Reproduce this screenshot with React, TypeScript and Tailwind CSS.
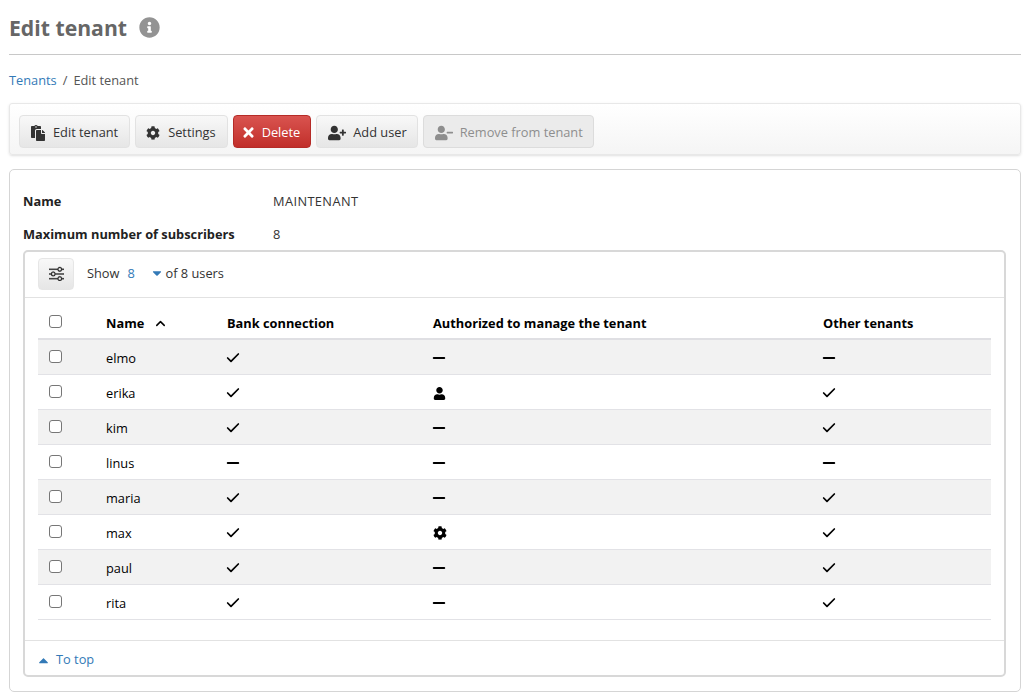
import { Check, ChevronUp, Minus } from "lucide-react";
import { BsSliders } from "react-icons/bs";
import {
  FaCaretDown,
  FaCaretUp,
  FaCog,
  FaInfoCircle,
  FaPaste,
  FaTimes,
  FaUser,
  FaUserMinus,
  FaUserPlus,
} from "react-icons/fa";

type Mark = "check" | "none" | "user" | "gear";

const users: { name: string; bank: Mark; auth: Mark; other: Mark }[] = [
  { name: "elmo", bank: "check", auth: "none", other: "none" },
  { name: "erika", bank: "check", auth: "user", other: "check" },
  { name: "kim", bank: "check", auth: "none", other: "check" },
  { name: "linus", bank: "none", auth: "none", other: "none" },
  { name: "maria", bank: "check", auth: "none", other: "check" },
  { name: "max", bank: "check", auth: "gear", other: "check" },
  { name: "paul", bank: "check", auth: "none", other: "check" },
  { name: "rita", bank: "check", auth: "none", other: "check" },
];

function MarkIcon({ mark }: { mark: Mark }) {
  if (mark === "check") return <Check size={16} strokeWidth={2.6} className="-ml-[2px] text-black" />;
  if (mark === "none") return <Minus size={18} strokeWidth={2.6} className="-ml-[3px] text-black" />;
  if (mark === "user") return <FaUser size={13} className="text-black" />;
  return <FaCog size={14} className="text-black" />;
}

function Box() {
  return <span className="block w-[13px] h-[13px] rounded-[3px] border border-[#767676] bg-white" />;
}

const btn =
  "h-[33px] pt-[2px] flex items-center rounded-[4px] border border-[#e2e2e2] bg-gradient-to-b from-[#f8f8f8] to-[#e6e6e6] text-[#333]";

export default function App() {
  return (
    <div className="h-[700px] overflow-hidden bg-white pl-[9px] pr-[7px] text-[12.8px] text-[#333] font-['Open_Sans','Liberation_Sans',sans-serif]">
      <div className="h-[55px] flex items-center gap-3 border-b border-[#c8c8c8] pt-[1px]">
        <h1 className="text-[21.2px] font-bold text-[#666]">Edit tenant</h1>
        <FaInfoCircle size={21} className="text-[#939393]" />
      </div>

      <nav className="h-[48px] flex items-center gap-[6px] pt-[4px] text-[#555]">
        <a className="text-[#337ab7]">Tenants</a>
        <span>/</span>
        <span>Edit tenant</span>
      </nav>

      <div className="h-[52px] flex items-end gap-[5px] pl-[9px] pr-[10px] pb-[6px] rounded-[3px] border border-[#e8e8e8] bg-gradient-to-b from-white to-[#f5f5f5] shadow-sm">
        <button className={`${btn} gap-[7px] pl-[10px] pr-[11px]`}>
          <FaPaste size={16} />
          Edit tenant
        </button>
        <button className={`${btn} gap-2 pl-[10px] pr-[11px]`}>
          <FaCog size={14} />
          Settings
        </button>
        <button className="h-[33px] pt-[2px] px-[10px] flex items-center gap-[6px] rounded-[4px] border border-[#b52b27] bg-gradient-to-b from-[#d9534f] to-[#c12e2a] text-white">
          <FaTimes size={15} className="-ml-[3px]" />
          Delete
        </button>
        <button className={`${btn} gap-[7px] pl-[11px] pr-[10px]`}>
          <FaUserPlus size={18} />
          Add user
        </button>
        <button className="h-[33px] pt-[2px] pl-[11px] pr-[10px] flex items-center gap-[7px] rounded-[4px] border border-[#dcdcdc] bg-[#ebebeb] text-[#8e8e8e]">
          <FaUserMinus size={18} />
          Remove from tenant
        </button>
      </div>

      <div className="mt-[14px] h-[523px] rounded-[5px] border border-[#d5d5d5] pl-[13px] pr-[14px] pt-[15px]">
        <dl className="h-[65px]">
          <div className="h-[33px] flex items-center">
            <dt className="w-[250px] font-bold text-[#222]">Name</dt>
            <dd className="tracking-[0.4px]">MAINTENANT</dd>
          </div>
          <div className="h-[33px] flex items-center">
            <dt className="w-[250px] font-bold text-[#222]">Maximum number of subscribers</dt>
            <dd>8</dd>
          </div>
        </dl>

        <div className="h-[427px] rounded-[5px] border-2 border-[#d8d8d8] flex flex-col">
          <div className="h-[46px] shrink-0 flex items-center px-[13px] pb-[2px] border-b border-[#e2e2e2]">
            <button className="w-[36px] h-[32px] flex items-center justify-center rounded-[4px] border border-[#e6e6e6] bg-gradient-to-b from-[#f8f8f8] to-[#e6e6e6] text-[#222]">
              <BsSliders size={15} stroke="currentColor" strokeWidth={0.3} />
            </button>
            <span className="ml-[13px]">Show</span>
            <span className="ml-[8px] w-[23px] text-[#337ab7]">8</span>
            <FaCaretDown size={14} className="-mt-[2px] text-[#337ab7]" />
            <span className="ml-[1px]">of 8 users</span>
          </div>

          <div className="flex-1 px-[13px]">
            <table className="w-full table-fixed border-collapse text-black">
              <thead>
                <tr className="h-[41px] border-b-2 border-[#dfdfe3]">
                  <th className="w-[68px] pl-[11px] pt-[7px] text-left font-normal"><Box /></th>
                  <th className="w-[121px] pt-[11px] text-left font-bold">
                    <span className="flex items-center gap-[9px]">
                      Name
                      <ChevronUp size={15} strokeWidth={2.4} />
                    </span>
                  </th>
                  <th className="w-[206px] pt-[11px] text-left font-bold">Bank connection</th>
                  <th className="w-[390px] pt-[11px] text-left font-bold">Authorized to manage the tenant</th>
                  <th className="pt-[11px] text-left font-bold">Other tenants</th>
                </tr>
              </thead>
              <tbody>
                {users.map((u, i) => (
                  <tr key={u.name} className={`h-[35px] border-b border-[#e2e2e6] ${i % 2 === 0 ? "bg-[#f2f2f2]" : "bg-white"}`}>
                    <td className="pl-[11px]"><Box /></td>
                    <td className="pt-[4px]">{u.name}</td>
                    <td className="pt-[3px]"><MarkIcon mark={u.bank} /></td>
                    <td className="pt-[3px]"><MarkIcon mark={u.auth} /></td>
                    <td className="pt-[3px]"><MarkIcon mark={u.other} /></td>
                  </tr>
                ))}
              </tbody>
            </table>
          </div>

          <div className="h-[35px] shrink-0 flex items-center gap-[5px] px-[11px] pt-[4px] border-t border-[#e2e2e2] text-[#337ab7]">
            <FaCaretUp size={15} />
            To top
          </div>
        </div>
      </div>
    </div>
  );
}
